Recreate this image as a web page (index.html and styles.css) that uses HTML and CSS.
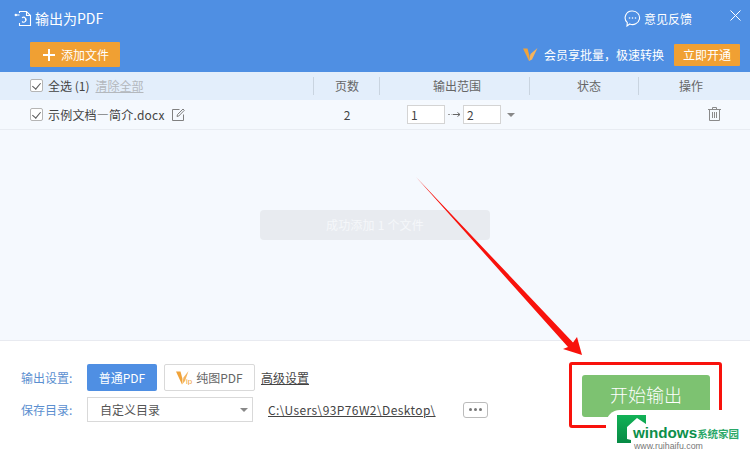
FILE: index.html
```html
<!DOCTYPE html>
<html lang="zh">
<head>
<meta charset="utf-8">
<title>输出为PDF</title>
<link rel="stylesheet" href="styles.css">
</head>
<body>
<div class="app">
  <header class="header">
    <div class="title-row">
      <div class="title">
        <svg class="title-icon" width="18" height="17" viewBox="0 0 18 17" fill="none" stroke="#fff" stroke-width="1.100"><path d="M5.500 3V1.500h7l4 4v10h-11v-2.500"/><path d="M12.500 1.500v4h4"/><path d="M8 11.500a2.400 2.400 0 1 0 0-3.600"/><path d="M11.500 8v2.500"/><circle cx="1.800" cy="5" r="1.200" fill="#fff" stroke="none"/><path d="M2 5h3.500"/></svg>
        <span>输出为PDF</span>
      </div>
      <div class="feedback">
        <svg width="17" height="17" viewBox="0 0 17 17" fill="none" stroke="#fff" stroke-width="1.100"><path d="M8.500 1a7 6.800 0 1 1-2.800 13L3 16l.3-3.300A6.800 6.800 0 0 1 8.500 1z"/><circle cx="5.500" cy="8" r=".8" fill="#fff" stroke="none"/><circle cx="8.500" cy="8" r=".8" fill="#fff" stroke="none"/><circle cx="11.500" cy="8" r=".8" fill="#fff" stroke="none"/></svg>
        <span>意见反馈</span>
      </div>
      <svg class="close" width="11" height="11" viewBox="0 0 11 11" stroke="#fff" stroke-width="1"><path d="M.5.500l10 10M10.500.500l-10 10"/></svg>
    </div>
    <div class="action-row">
      <button class="add-btn"><span class="plus"></span>添加文件</button>
      <div class="promo">
        <svg width="15" height="15" viewBox="0 0 15 15"><path d="M0 1.500h4.500l2 7.500L6 14z" fill="#f0a33a"/><path d="M6 14l1.500-7L14.500 1 9 12.500z" fill="#f5b35c"/></svg>
        <span class="promo-text">会员享批量，极速转换</span>
        <button class="open-btn">立即开通</button>
      </div>
    </div>
  </header>

  <div class="table-row table-head">
    <div class="cell name-cell">
      <span class="check"></span>
      <span>全选 (1)</span>
      <span class="clear">清除全部</span>
    </div>
    <div class="cell center sep pages-head">页数</div>
    <div class="cell center sep range-head">输出范围</div>
    <div class="cell center sep status-head">状态</div>
    <div class="cell center sep ops-head">操作</div>
  </div>

  <div class="table-row file-row">
    <div class="cell name-cell">
      <span class="check"></span>
      <span class="file-name">示例文档—简介.docx</span>
      <svg class="edit" width="13" height="13" viewBox="0 0 13 13" fill="none" stroke="#808080" stroke-width="1"><path d="M11.500 6.500v6h-11v-11h7"/><path d="M5 8.500l.5-2L11 1l1.300 1.300L6.800 8z"/></svg>
    </div>
    <div class="cell center pages-head">2</div>
    <div class="cell range">
      <span class="range-input from">1</span>
      <svg width="14" height="7" viewBox="0 0 14 7" fill="none" stroke="#666" stroke-width="1"><path d="M1 3.500h2M4.500 3.500h1" stroke="#999"/><path d="M6 3.500h7M10.500 1.500l2.500 2-2.500 2"/></svg>
      <span class="range-input to">2</span>
      <span class="caret range-caret"></span>
    </div>
    <div class="cell"></div>
    <div class="cell trash-cell">
      <svg width="13" height="14" viewBox="0 0 13 14" fill="none" stroke="#8a8a8a" stroke-width="1"><path d="M0 2.500h13M4.500 2.500v-2h4v2M1.500 2.500v11h10v-11M4.500 5v6M6.500 5v6M8.500 5v6"/></svg>
    </div>
  </div>

  <main class="list-area">
    <div class="toast">成功添加 1 个文件</div>
  </main>

  <footer class="footer">
    <div class="settings">
      <div class="setting-row">
        <span class="label">输出设置:</span>
        <button class="pdf-btn primary">普通PDF</button>
        <button class="pdf-btn outline">
          <svg width="18" height="15" viewBox="0 0 18 15"><path d="M0 1.500h4.500l2 7.500L6 14.500z" fill="#f0a33a"/><path d="M6 14.500l1.500-7L12.500 1 9 11z" fill="#f5b35c"/><text x="10" y="14" font-size="8" fill="#f0a33a" font-family="Liberation Sans">ip</text></svg>
          纯图PDF
        </button>
        <a class="link">高级设置</a>
      </div>
      <div class="setting-row second">
        <span class="label">保存目录:</span>
        <div class="select"><span>自定义目录</span><span class="caret"></span></div>
        <a class="link path">C:\Users\93P76W2\Desktop\</a>
        <button class="more"><i></i><i></i><i></i></button>
      </div>
    </div>
    <button class="start">开始输出</button>
  </footer>

  <div class="highlight"></div>
  <svg class="arrow" width="175" height="185" viewBox="0 0 175 185"><path d="M0 0L157 165.500L161 160L166 178L147 172L152 170Z" fill="#f8120c"/></svg>
  <div class="watermark">
    <svg class="wm-logo" width="30" height="28" viewBox="0 0 30 28"><defs><linearGradient id="wmGreen" x1="0" y1="0" x2="0" y2="1"><stop offset="0" stop-color="#12b257"/><stop offset="1" stop-color="#078a45"/></linearGradient></defs><path d="M0 0H29V9L20 3L10 12V24L14 25V28H0Z" fill="url(#wmGreen)"/></svg>
    <div class="wm-text">
      <div class="wm-main">windows<span>系统家园</span></div>
      <div class="wm-url">www.ruihaifu.com</div>
    </div>
  </div>
</div>
</body>
</html>
```
FILE: styles.css
```css
* { box-sizing: border-box; }
html, body { margin: 0; padding: 0; }
body { width: 750px; height: 450px; overflow: hidden; background: #fff; font-family: "Noto Sans CJK SC", "Liberation Sans", sans-serif; font-size: 12px; color: #444; }
button { font-family: inherit; padding: 0; border: none; }

.app { position: relative; width: 750px; height: 450px; display: flex; flex-direction: column; overflow: hidden; }

.header { height: 72px; flex: none; background: #4f8fe3; color: #fff; }
.title-row { height: 42px; display: flex; align-items: center; padding: 0 9px 6px 14px; }
.title { display: flex; align-items: center; gap: 3px; font-size: 14px; }
.feedback { margin-left: auto; display: flex; align-items: center; gap: 3px; font-size: 12px; margin-right: 38px; }
.close { margin-bottom: 6px; }
.action-row { display: flex; align-items: center; justify-content: space-between; padding: 0 10px 0 30px; }
.add-btn { width: 90px; height: 25px; background: #f0a033; color: #fff; font-size: 12px; display: flex; align-items: center; justify-content: center; gap: 6px; padding-left: 2px; border-radius: 1px; }
.plus { position: relative; width: 12px; height: 12px; background: linear-gradient(#fff, #fff) center / 12px 2px no-repeat, linear-gradient(#fff, #fff) center / 2px 12px no-repeat; }
.promo { display: flex; align-items: center; }
.promo-text { margin: 0 10px 0 6px; font-size: 12px; }
.open-btn { width: 66px; height: 22px; background: #f0a033; color: #fff; font-size: 12px; border-radius: 1px; }

.table-row { display: grid; grid-template-columns: 313px 66px 150px 109px 112px; flex: none; align-items: center; }
.table-head { height: 28px; background: #e3eefb; }
.file-row { height: 30px; background: #f5f9fe; border-bottom: 1px solid #e8ecf2; }
.cell { display: flex; align-items: center; height: 100%; }
.center { justify-content: center; }
.table-head .cell { padding-bottom: 2px; }
.file-row .cell { padding-bottom: 1px; }
.table-head .name-cell, .file-row .name-cell { padding-left: 30px; }
.sep { position: relative; color: #666; }
.sep::before { content: ""; position: absolute; left: 0; top: 5px; bottom: 5px; width: 1px; background: #c9d4e0; }
.table-head .pages-head, .file-row .pages-head { padding-left: 2px; }
.table-head .range-head { padding-left: 6px; }
.table-head .status-head { padding-left: 11px; }
.table-head .ops-head { padding-right: 6px; }
.name-cell { gap: 5px; }
.check { position: relative; width: 13px; height: 13px; background: #fff; border: 1px solid #b5b5b5; border-radius: 2px; flex: none; }
.check::after { content: ""; position: absolute; left: 3px; top: 1px; width: 4px; height: 7px; border: solid #555; border-width: 0 1.500px 1.500px 0; transform: rotate(40deg); }
.clear { color: #b4b8bd; text-decoration: underline; margin-left: 1px; }
.file-name { letter-spacing: .2px; }
.edit { margin-left: 2px; }
.range { padding-left: 28px; gap: 2px; }
.range-input { height: 19px; background: #fff; border: 1px solid #d4d4d4; padding-left: 3px; line-height: 17px; color: #444; }
.from { width: 38px; }
.to { width: 38px; }
.caret { width: 0; height: 0; border-left: 4px solid transparent; border-right: 4px solid transparent; border-top: 4px solid #888; }
.range-caret { margin: 2px 0 0 4px; }
.trash-cell { justify-content: flex-end; padding-right: 29px; }

.list-area { flex: 1; background: #f5f9fe; display: flex; justify-content: center; align-items: flex-start; padding-top: 80px; }
.toast { width: 230px; height: 30px; background: #e8ebf0; border-radius: 4px; color: #f5f7fa; display: flex; align-items: center; justify-content: center; font-size: 12px; letter-spacing: .2px; padding-bottom: 2px; }

.footer { height: 110px; flex: none; background: #fff; border-top: 1px solid #e8eaf0; display: flex; justify-content: space-between; padding: 22px 40px 0 21px; }
.setting-row { display: flex; align-items: center; height: 28px; }
.setting-row.second { margin-top: 6px; height: 25px; }
.label { width: 66px; color: #5b8fd0; font-size: 12px; }
.pdf-btn { height: 27px; font-size: 12px; border-radius: 2px; display: flex; align-items: center; justify-content: center; }
.primary { width: 70px; background: #4f8fe3; color: #fff; }
.outline { width: 91px; margin-left: 7px; background: #fff; border: 1px solid #d9d9d9; color: #666; gap: 2px; }
.link { color: #444; text-decoration: underline; margin-left: 6px; }
.select { width: 166px; height: 25px; border: 1px solid #d9d9d9; background: #fff; display: flex; align-items: center; justify-content: space-between; padding: 0 4px 0 12px; color: #555; }
.path { margin-left: 15px; letter-spacing: .4px; }
.more { margin-left: 27px; width: 25px; height: 16px; background: #fff; border: 1px solid #bbb; border-radius: 3px; display: flex; align-items: center; justify-content: center; gap: 2px; }
.more i { width: 3px; height: 3px; border-radius: 50%; background: #777; }
.start { width: 128px; height: 42px; margin-top: 12px; padding-bottom: 4px; background: #7dc271; color: #fff; font-size: 18px; border-radius: 3px; font-weight: 300; }

.highlight { position: absolute; left: 569px; top: 362px; width: 153px; height: 66px; border: 3px solid #f8120c; border-radius: 3px; }
.arrow { position: absolute; left: 416px; top: 177px; }
.watermark { position: absolute; left: 606px; top: 410px; width: 144px; height: 40px; background: #fff; border-radius: 14px 0 0 0; display: flex; padding: 5px 0 0 11px; }
.wm-logo { margin-right: -14px; flex: none; }
.wm-text { display: flex; flex-direction: column; margin-top: 10px; }
.wm-main { font-family: "Liberation Sans", sans-serif; font-weight: 700; font-size: 15.200px; line-height: 16px; color: #0c8f4a; white-space: nowrap; }
.wm-main span { font-family: "Noto Sans CJK SC", sans-serif; font-size: 10.500px; color: #2aa868; }
.wm-url { font-family: "Liberation Sans", sans-serif; font-size: 8.800px; line-height: 9px; color: #777; margin-left: 1px; }
```
